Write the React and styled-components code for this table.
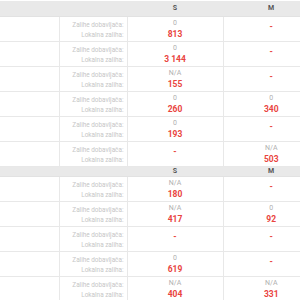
// dependences
import React from 'react';

// styles
import styled, { createGlobalStyle } from 'styled-components';

const GlobalStyle = createGlobalStyle`
    html, body {
        margin: 0;
        padding: 0;
        background: #fff;
        font-family: Roboto, "Liberation Sans", sans-serif;
    }
`;

const Wrap = styled.div`
    width: 300px;
    height: 300px;
    overflow: hidden;
    padding-top: 1px;
    box-sizing: border-box;
`;

const Table = styled.table`
    width: 319px;
    table-layout: fixed;
    border-collapse: collapse;
    border-spacing: 0;
`;

const Row = styled.tr`
    height: ${p => p.$h}px;
`;

const HeadCell = styled.th`
    box-sizing: border-box;
    padding: 0;
    background: #e9e9e9;
    color: #555;
    font-size: 7px;
    line-height: 8px;
    font-weight: 700;
    text-align: center;
    vertical-align: middle;
    border-bottom: 1px solid #e2e2e2;
`;

const Cell = styled.td`
    box-sizing: border-box;
    padding: 0;
    border-bottom: 1px solid #e8e8e8;
    border-left: ${p => (p.$first ? 'none' : '1px solid #e8e8e8')};
    vertical-align: top;
`;

const LabelCell = styled(Cell)`
    text-align: right;
    padding: 3px 3px 0 0;
    font-size: 6.4px;
    line-height: 10px;
    color: #c6c6c6;
    white-space: nowrap;
`;

const ValueCell = styled(Cell)`
    text-align: center;
    padding-top: 2px;
`;

const Supplier = styled.div`
    font-size: 7px;
    line-height: 9px;
    color: #b0b0b0;
`;

const Local = styled.div`
    font-size: 8.5px;
    line-height: 12px;
    font-weight: 700;
    color: #e9443e;
    padding-top: ${p => (p.$alone ? '1px' : '0')};
`;

const groups = [
    [
        [['0', '813'], null],
        [['0', '3 144'], null],
        [['N/A', '155'], null],
        [['0', '260'], ['0', '340']],
        [['0', '193'], null],
        [null, ['N/A', '503']],
    ],
    [
        [['N/A', '180'], null],
        [['N/A', '417'], ['0', '92']],
        [null, null],
        [['0', '619'], null],
        [['N/A', '404'], ['N/A', '331']],
    ],
];

function Value({ v }) {
    return <ValueCell>
        {v ? <>
            <Supplier>{v[0]}</Supplier>
            <Local>{v[1]}</Local>
        </> : <Local $alone>-</Local>}
    </ValueCell>
}

export default function App() {
    return <Wrap>
        <GlobalStyle />
        <Table>
            <colgroup>
                <col style={{ width: 59 }} />
                <col style={{ width: 68 }} />
                <col style={{ width: 96 }} />
                <col style={{ width: 96 }} />
            </colgroup>
            <tbody>
                {groups.map((rows, g) => <React.Fragment key={g}>
                    <Row $h={g === 0 ? 15 : 10}>
                        <HeadCell />
                        <HeadCell />
                        <HeadCell>S</HeadCell>
                        <HeadCell>M</HeadCell>
                    </Row>
                    {rows.map((r, i) => <Row $h={25} key={i}>
                        <Cell $first />
                        <LabelCell>
                            <div>Zalihe dobavljača:</div>
                            <div>Lokalna zaliha:</div>
                        </LabelCell>
                        <Value v={r[0]} />
                        <Value v={r[1]} />
                    </Row>)}
                </React.Fragment>)}
            </tbody>
        </Table>
    </Wrap>
}
